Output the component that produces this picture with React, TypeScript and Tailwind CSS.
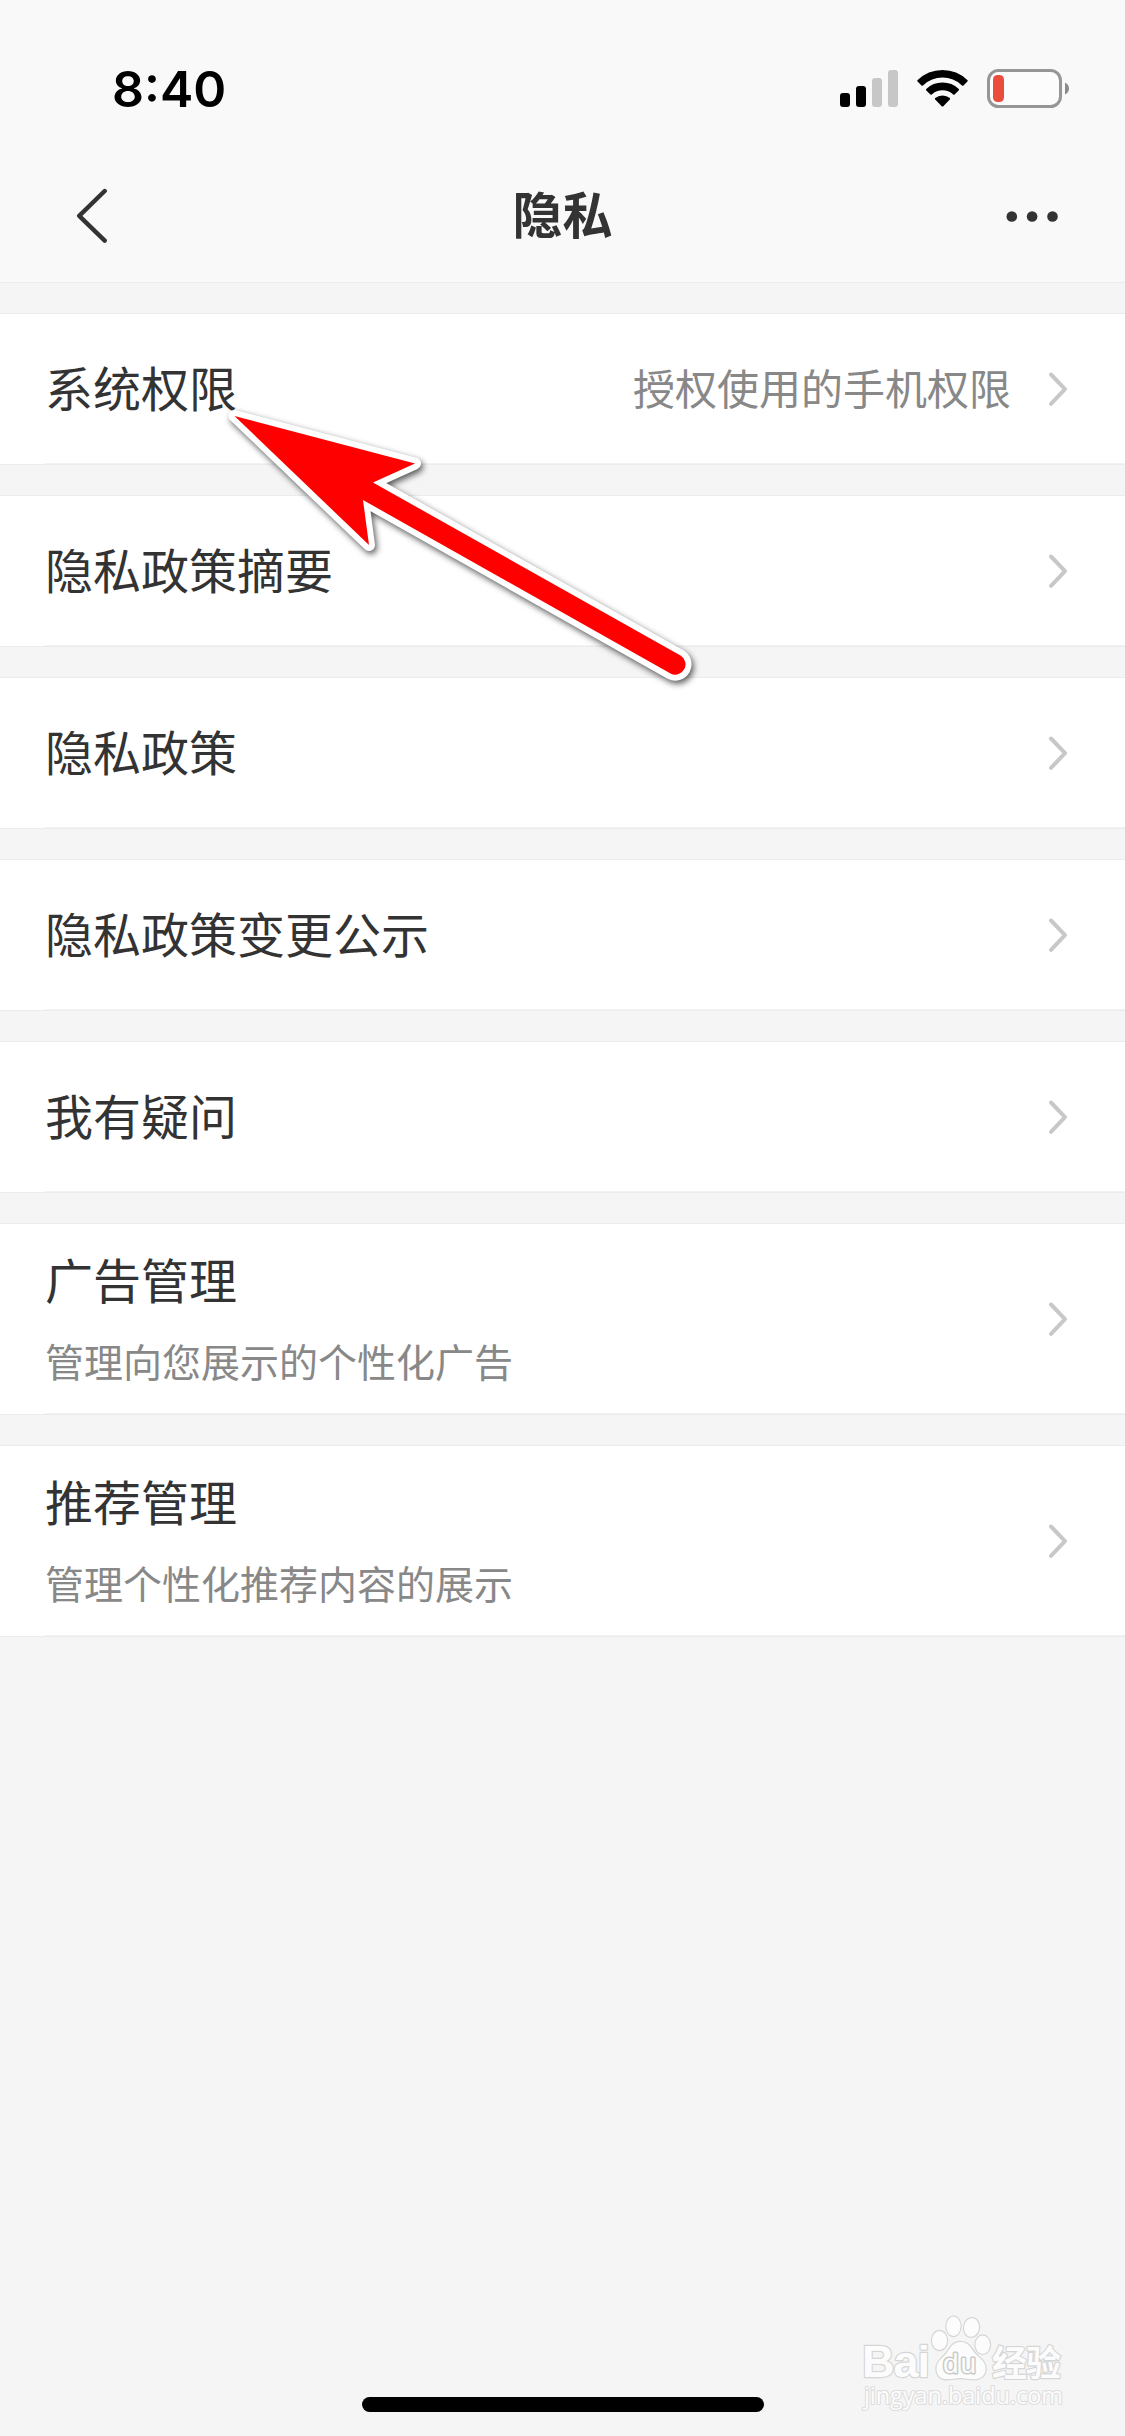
import React from 'react';

interface PrivacyItem {
  title: string;
  value?: string;
  description?: string;
}

const items: PrivacyItem[] = [
  { title: '系统权限', value: '授权使用的手机权限' },
  { title: '隐私政策摘要' },
  { title: '隐私政策' },
  { title: '隐私政策变更公示' },
  { title: '我有疑问' },
  { title: '广告管理', description: '管理向您展示的个性化广告' },
  { title: '推荐管理', description: '管理个性化推荐内容的展示' },
];

const StatusBar: React.FC = () => (
  <div className="flex h-[132px] items-start justify-between pt-[60px] pr-[55px] pl-[112px]">
    <div className="font-['Inter',sans-serif] text-[50px] leading-[58px] font-semibold text-black [font-feature-settings:'case']">
      8:40
    </div>
    <div className="flex items-start pt-[9px]">
      {/* Signal */}
      <svg width="58" height="38" viewBox="0 0 58 38" className="mr-[19px]">
        <rect x="0" y="24" width="10" height="14" rx="3" fill="#000" />
        <rect x="16" y="17" width="10" height="21" rx="3" fill="#000" />
        <rect x="32" y="9" width="10" height="29" rx="3" fill="#c7c7c7" />
        <rect x="48" y="1" width="10" height="37" rx="3" fill="#c7c7c7" />
      </svg>
      {/* Wi-Fi */}
      <svg width="51" height="38" viewBox="0 0 51 38" className="mr-[19px]">
        <path d="M0.4 11.2Q11 1 25.5 1T50.6 11.2Q51 12 50.4 12.6L46.5 16.4Q45.7 17 45 16.4Q36.5 8.6 25.5 8.6T6 16.4Q5.3 17 4.5 16.4L0.6 12.6Q0 12 0.4 11.2Z" />
        <path d="M9.2 20Q16 13.6 25.5 13.6T41.8 20Q42.3 20.7 41.7 21.4L37.6 25.4Q37 26 36.2 25.4Q31.5 21.3 25.5 21.3T14.8 25.4Q14 26 13.4 25.4L9.3 21.4Q8.7 20.7 9.2 20Z" />
        <path d="M18.2 29Q21.2 26.4 25.5 26.4T32.8 29Q33.4 29.7 32.8 30.4L26.3 37.2Q25.5 38 24.7 37.2L18.2 30.4Q17.6 29.7 18.2 29Z" />
      </svg>
      {/* Battery */}
      <svg width="83" height="39" viewBox="0 0 83 39">
        <rect x="1.5" y="1.5" width="72" height="36" rx="10" fill="#fff" fillOpacity="0.5" stroke="#969696" strokeWidth="3" />
        <rect x="6" y="6" width="11" height="27" rx="4.5" fill="#eb4d3d" />
        <path d="M78 13.5Q82 15.5 82 19.5T78 25.5Z" fill="#8b8b8b" />
      </svg>
    </div>
  </div>
);

const NavBar: React.FC = () => (
  <div className="flex h-[150px] items-start justify-between pr-[66px] pl-[76px]">
    <button className="mt-[56px]">
      <svg width="32" height="56" viewBox="0 0 32 56" fill="none" stroke="#333" strokeWidth="4.4" strokeLinecap="round" strokeLinejoin="round">
        <path d="M28.7 3L3.2 27.8L28.7 52.6" />
      </svg>
    </button>
    <h1 className="mt-[44px] ml-[11px] text-[50px] leading-[72px] font-bold text-[#333]">隐私</h1>
    <button className="mt-[78px]">
      <svg width="53" height="12" viewBox="0 0 53 12" fill="#333">
        <circle cx="5.8" cy="6.5" r="5.3" />
        <circle cx="26.1" cy="6.5" r="5.3" />
        <circle cx="46.5" cy="6.5" r="5.3" />
      </svg>
    </button>
  </div>
);

const Row: React.FC<{ item: PrivacyItem }> = ({ item }) => (
  <div className="border-y border-[#ececec] bg-white pl-[45px]">
    <div
      className={`flex items-center border-b border-[#f3f3f3] pr-[56px] ${item.description ? 'h-[190px]' : 'h-[150px]'}`}
    >
      {item.description ? (
        <div className="flex flex-1 flex-col pb-[4px]">
          <span className="text-[48px] leading-[66px] text-[#333]">{item.title}</span>
          <span className="mt-[21px] text-[39px] leading-[56px] text-[#888]">{item.description}</span>
        </div>
      ) : (
        <span className="flex-1 pb-[6px] text-[48px] leading-[70px] text-[#333]">{item.title}</span>
      )}
      {item.value && (
        <span className="mr-[36px] pb-[3px] text-[42px] leading-[60px] text-[#888]">{item.value}</span>
      )}
      <svg width="22" height="36" viewBox="0 0 22 36" fill="none" stroke="#c8c8c8" strokeWidth="4" strokeLinecap="round" strokeLinejoin="round">
        <path d="M4 3.5L18 18.2L4 32.9" />
      </svg>
    </div>
  </div>
);

const PointerArrow: React.FC = () => (
  <svg
    className="pointer-events-none absolute top-[390px] left-[210px] [filter:drop-shadow(2px_3px_3px_rgba(0,0,0,0.65))]"
    width="500"
    height="310"
    viewBox="0 0 500 310"
  >
    <path
      d="M24.5 26L205 73.5L163 92.5L470.5 265.5A10.3 10.3 0 0 1 460.5 283.5L153 110L159 155Z"
      fill="#f00"
      stroke="#fff"
      strokeWidth="12"
      strokeLinejoin="round"
      paintOrder="stroke"
    />
  </svg>
);

const Watermark: React.FC = () => (
  <svg
    className="absolute top-[2310px] left-[858px]"
    width="212"
    height="106"
    viewBox="0 0 212 106"
    fill="#fcfcfc"
    stroke="#d6d6d6"
    strokeWidth="2.4"
    strokeLinejoin="round"
    paintOrder="stroke"
  >
    <text x="4" y="67" fontFamily="Liberation Sans, sans-serif" fontWeight="700" fontSize="45" textLength="68">
      Bai
    </text>
    <ellipse cx="81.5" cy="30.5" rx="7.5" ry="9.5" />
    <ellipse cx="95.5" cy="16.3" rx="7" ry="9.7" />
    <ellipse cx="113.5" cy="17.5" rx="7.5" ry="9.3" transform="rotate(8 113.5 17.5)" />
    <ellipse cx="124.7" cy="34.7" rx="7.3" ry="9.2" />
    <path d="M102.5 32C111 32 113 39 118 44.5C123 49 127.5 52 127.5 59C127.5 66 122 69.5 115 69.3C110 69.3 107 68 102.5 68C98 68 94 69.3 89 69.3C82 69.3 78.5 65 78.5 58.5C78.5 51 85 48 89 42.5C92 38 95 32 102.5 32Z" />
    <text x="85" y="63" fontFamily="Liberation Sans, sans-serif" fontSize="28" stroke="#cacaca" strokeWidth="3" textLength="33">
      du
    </text>
    <text x="134" y="66" fontFamily="Noto Sans CJK SC, sans-serif" fontWeight="700" fontSize="35" textLength="69">
      经验
    </text>
    <text x="6" y="94" fontFamily="Open Sans, sans-serif" fontSize="23.5" strokeWidth="2.2" stroke="#dedede" textLength="199">
      jingyan.baidu.com
    </text>
  </svg>
);

export default function App() {
  return (
    <div className="relative flex h-[2436px] w-[1125px] flex-col overflow-hidden bg-[#f5f5f5] font-['Noto_Sans_CJK_SC',sans-serif]">
      {/* Header */}
      <header className="border-b border-[#ececec] bg-[#f9f9f9]">
        <StatusBar />
        <NavBar />
      </header>

      {/* List */}
      <main className="flex flex-1 flex-col gap-[30px] pt-[30px]">
        {items.map((item) => (
          <Row key={item.title} item={item} />
        ))}
      </main>

      {/* Home indicator */}
      <div className="mb-[24px] h-[15px] w-[402px] self-center rounded-full bg-black" />

      <PointerArrow />
      <Watermark />
    </div>
  );
}
